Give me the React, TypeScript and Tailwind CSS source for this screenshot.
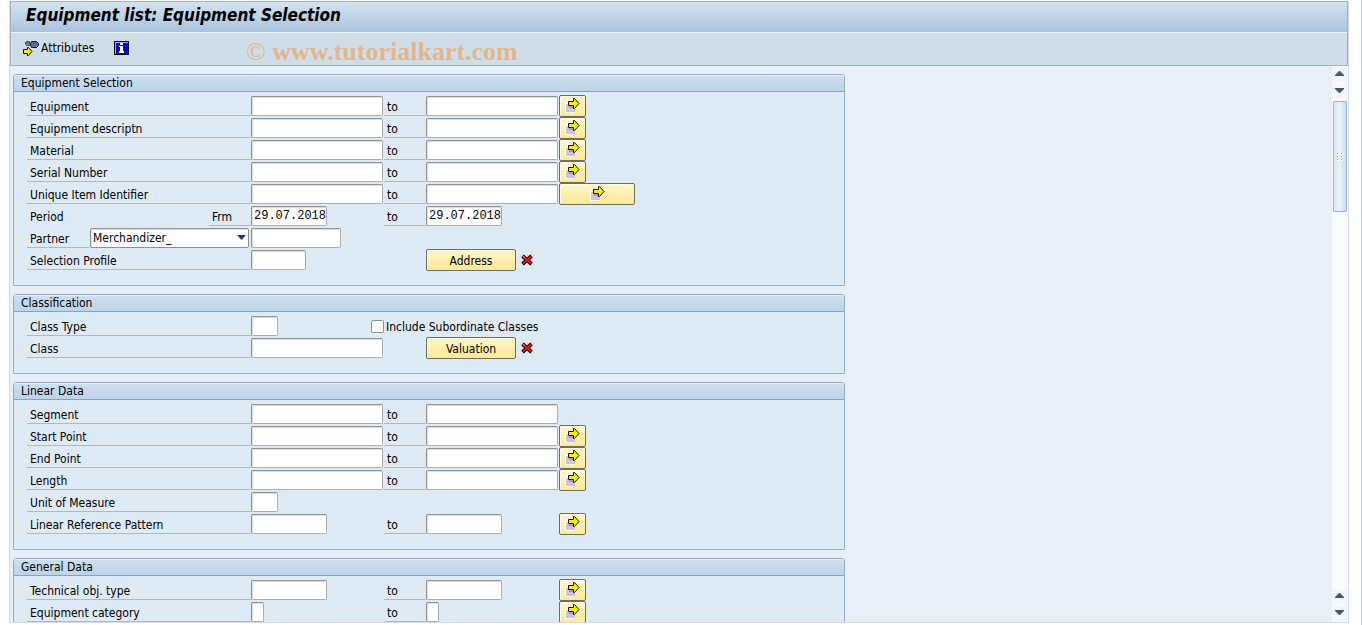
import type { ReactNode } from "react";

type RowProps = {
  label: string;
  first?: string;
  second?: string;
  more?: "small" | "wide";
};

const INPUT =
  "block h-5 border border-[#a9adb2] border-t-[#8d9196] border-l-[#8d9196] rounded-[2px] bg-white pl-0.5 font-['Liberation_Mono',monospace] text-[12px] leading-4 text-black shadow-[inset_1px_1px_1px_#dcdcdc] outline-none";

const BUTTON =
  "flex h-[22px] items-center justify-center rounded-[2px] border border-[#6f6c60] bg-linear-to-b from-[#fff8d0] via-[#ffefae] to-[#fee998] shadow-[inset_1px_1px_0_#fffbe6]";

function ArrowIcon() {
  return (
    <svg width="15" height="16" viewBox="0 0 15 16" aria-hidden="true">
      <path d="M0 5h9v10H0z" fill="#fff" />
      <path d="M1 6h9v8H1z" fill="#d3bfe0" />
      <path d="M4 8h6v2H4z" fill="#8f9fd0" />
      <path d="M3.500 3.500h5v-3h1l4.500 5-4.500 5h-1v-3h-5z" fill="#ffee00" stroke="#111" />
    </svg>
  );
}

function CrossIcon() {
  return (
    <svg width="12" height="12" viewBox="0 0 12 12" aria-hidden="true">
      <path d="M1.500 2l9 8M10.500 2l-9 8" stroke="#1c0000" strokeWidth="3.800" />
      <path d="M2 2.500l8 7M10 2.500l-8 7" stroke="#e3141e" strokeWidth="2" />
      <path d="M2 2l2.500 2.200" stroke="#ff8c8c" />
    </svg>
  );
}

function AttributesIcon() {
  return (
    <svg width="16" height="15" viewBox="0 0 16 15" aria-hidden="true">
      <path d="M3.500 .5h3v4h-3l-1-1v-2z" fill="#6a74ad" stroke="#2a2d4c" strokeDasharray="2 1" />
      <path d="M8.500 .5h5l2 2v2l-2 2h-5l-1-2v-2z" fill="#5c68a6" stroke="#111631" />
      <path d="M.5 8.500h4v-2h1l3.500 4-3.500 4h-1v-2h-4z" fill="#ffee00" stroke="#111" />
    </svg>
  );
}

function InfoIcon() {
  return (
    <svg width="15" height="14" viewBox="0 0 15 14" shapeRendering="crispEdges" aria-hidden="true">
      <path d="M0 0h15v14H0z" fill="#000" />
      <path d="M1 1h13v12H1z" fill="#9cb4ff" />
      <path d="M2 2h12v11H2z" fill="#0000e6" />
      <path d="M6 2h3v2H6zM5 5h4v5h1v2H5v-2h1V6H5z" fill="#fff" />
    </svg>
  );
}

function Label({ htmlFor, children }: { htmlFor: string; children: ReactNode }) {
  return (
    <label htmlFor={htmlFor} className="h-[21px] border-b border-[#b3b8bd] pl-[3px] leading-[24px]">
      {children}
    </label>
  );
}

function Line({ children }: { children: ReactNode }) {
  return <div className="grid h-[22px] grid-cols-[224px_133px_42px_133px_auto] justify-start">{children}</div>;
}

function MoreButton({ label, wide }: { label: string; wide?: boolean }) {
  return (
    <button type="button" aria-label={`Multiple selection for ${label}`} className={`${BUTTON} ${wide ? "w-[76px]" : "w-[27px]"}`}>
      <ArrowIcon />
    </button>
  );
}

function RangeRow({ label, first = "w-[132px]", second = first, more }: RowProps) {
  const id = label.toLowerCase().replace(/\W+/g, "-");
  return (
    <Line>
      <Label htmlFor={id}>{label}</Label>
      <input id={id} className={`${INPUT} ${first} mt-px`} />
      <Label htmlFor={`${id}-to`}>to</Label>
      <input id={`${id}-to`} className={`${INPUT} ${second} mt-px`} />
      {more && <MoreButton label={label} wide={more === "wide"} />}
    </Line>
  );
}

function SingleRow({ label, first = "w-[132px]", children }: RowProps & { children?: ReactNode }) {
  const id = label.toLowerCase().replace(/\W+/g, "-");
  return (
    <Line>
      <Label htmlFor={id}>{label}</Label>
      <input id={id} className={`${INPUT} ${first} mt-px`} />
      {children}
    </Line>
  );
}

function ActionButton({ children }: { children: ReactNode }) {
  return (
    <div className="col-start-4 flex items-center gap-[5px]">
      <button type="button" className={`${BUTTON} w-[90px] pt-0.5`}>
        {children}
      </button>
      <CrossIcon />
    </div>
  );
}

function Group({ title, children }: { title: string; children: ReactNode }) {
  return (
    <section className="w-[832px] shrink-0 rounded-t-[3px] border border-[#8fb0cd] bg-[#deebf4]">
      <h2 className="h-[17px] rounded-t-[2px] border-b border-[#86a3c4] bg-linear-to-b from-[#cfe0ef] to-[#bcd3e9] pl-[7px] leading-4 shadow-[inset_0_1px_0_#e6f1fa]">
        {title}
      </h2>
      <div className="px-[13px] pt-[3px] pb-[14px]">{children}</div>
    </section>
  );
}

function ScrollButton({ up }: { up?: boolean }) {
  return (
    <button
      type="button"
      aria-label={up ? "Scroll up" : "Scroll down"}
      className="flex h-[15px] w-full shrink-0 items-center justify-center bg-[#f3f7fb] pb-0.5"
    >
      <svg width="9" height="5" viewBox="0 0 9 5" aria-hidden="true">
        <path d={up ? "M0 5V4l4-4h1l4 4v1z" : "M0 0h9v1L5 5H4L0 1z"} fill="#4a5a6c" />
      </svg>
    </button>
  );
}

function Scrollbar() {
  return (
    <div className="flex w-4 shrink-0 flex-col gap-0.5 bg-[#fafbfc] pt-px pb-px pr-px">
      <ScrollButton up />
      <ScrollButton />
      <div className="ml-px flex h-[111px] w-[14px] shrink-0 items-center justify-center rounded-[1px] border border-[#9db2c6] bg-linear-to-r from-[#dce8f1] via-[#e9f2f8] to-[#ccdce9]">
        <svg width="6" height="8" viewBox="0 0 6 8" shapeRendering="crispEdges" aria-hidden="true">
          <path d="M0 0h2v2H0zM4 0h2v2H4zM0 3h2v2H0zM4 3h2v2H4zM0 6h2v2H0zM4 6h2v2H4z" fill="#fff" />
          <path d="M0 0h1v1H0zM4 0h1v1H4zM0 3h1v1H0zM4 3h1v1H4zM0 6h1v1H0zM4 6h1v1H4z" fill="#8499ad" />
        </svg>
      </div>
      <div className="flex-1" />
      <ScrollButton up />
      <ScrollButton />
    </div>
  );
}

export default function App() {
  return (
    <div className="h-screen border-r border-[#c5ccd3] bg-white pt-px pr-3 pb-0.5 pl-[9px] font-['DejaVu_Sans_Condensed','DejaVu_Sans',sans-serif] text-[12px] text-black">
      <div className="flex h-full flex-col border-r border-b border-l border-[#d3dae8] bg-[#e8eff7]">
        <header className="relative shrink-0 border border-[#9fb2c4] bg-[#cfdde8]">
          <h1 className="h-[31px] border-b border-[#edf4f9] bg-linear-to-b from-[#d3e3ef] to-[#aac3dc] pl-[15px] text-[17px] leading-[26px] font-bold italic">
            Equipment list: Equipment Selection
          </h1>
          <div className="flex h-8 items-center gap-5 pb-0.5 pl-3">
            <button type="button" className="flex items-center gap-0.5">
              <AttributesIcon />
              Attributes
            </button>
            <button type="button" aria-label="Information">
              <InfoIcon />
            </button>
          </div>
          <div className="absolute top-[35px] left-[235px] font-['Liberation_Serif',serif] text-[26px] leading-[30px] font-bold whitespace-nowrap text-[#e2b68a]">
            <span className="font-normal">©</span> www.tutorialkart.com
          </div>
        </header>

        <div className="flex min-h-0 flex-1">
          <main className="flex min-w-0 flex-1 flex-col gap-2 overflow-hidden pt-2 pl-[3px]">
            <Group title="Equipment Selection">
              <RangeRow label="Equipment" more="small" />
              <RangeRow label="Equipment descriptn" more="small" />
              <RangeRow label="Material" more="small" />
              <RangeRow label="Serial Number" more="small" />
              <RangeRow label="Unique Item Identifier" more="wide" />
              <Line>
                <div className="grid grid-cols-[182px_42px]">
                  <span className="pl-[3px] leading-[24px]">Period</span>
                  <Label htmlFor="period-from">Frm</Label>
                </div>
                <input id="period-from" defaultValue="29.07.2018" className={`${INPUT} mt-px w-[76px]`} />
                <Label htmlFor="period-to">to</Label>
                <input id="period-to" defaultValue="29.07.2018" className={`${INPUT} mt-px w-[76px]`} />
              </Line>
              <Line>
                <div className="grid grid-cols-[63px_159px]">
                  <Label htmlFor="partner">Partner</Label>
                  <div className="relative">
                    <select
                      id="partner"
                      className="mt-px block h-5 w-full appearance-none rounded-[2px] border border-[#8d9196] bg-white pl-0.5 leading-4 shadow-[inset_1px_1px_1px_#dcdcdc]"
                    >
                      <option>Merchandizer_</option>
                    </select>
                    <svg width="9" height="5" viewBox="0 0 9 5" aria-hidden="true" className="pointer-events-none absolute top-2 right-[3px]">
                      <path d="M0 0h9L4.500 5z" fill="#1f3a6b" />
                    </svg>
                  </div>
                </div>
                <input aria-label="Partner number" className={`${INPUT} mt-px w-[90px]`} />
              </Line>
              <SingleRow label="Selection Profile" first="w-[55px]">
                <ActionButton>Address</ActionButton>
              </SingleRow>
            </Group>

            <Group title="Classification">
              <SingleRow label="Class Type" first="w-[27px]">
                <label className="-ml-[13px] flex h-[23px] items-center gap-0.5 whitespace-nowrap">
                  <input type="checkbox" className="size-[13px] shrink-0 appearance-none rounded-[2px] border border-[#8d9196] bg-white checked:bg-[#44546a]" />
                  Include Subordinate Classes
                </label>
              </SingleRow>
              <SingleRow label="Class">
                <ActionButton>Valuation</ActionButton>
              </SingleRow>
            </Group>

            <Group title="Linear Data">
              <RangeRow label="Segment" />
              <RangeRow label="Start Point" more="small" />
              <RangeRow label="End Point" more="small" />
              <RangeRow label="Length" more="small" />
              <SingleRow label="Unit of Measure" first="w-[27px]" />
              <RangeRow label="Linear Reference Pattern" first="w-[76px]" more="small" />
            </Group>

            <Group title="General Data">
              <RangeRow label="Technical obj. type" first="w-[76px]" more="small" />
              <RangeRow label="Equipment category" first="w-[13px]" more="small" />
            </Group>
          </main>
          <Scrollbar />
        </div>
      </div>
    </div>
  );
}
